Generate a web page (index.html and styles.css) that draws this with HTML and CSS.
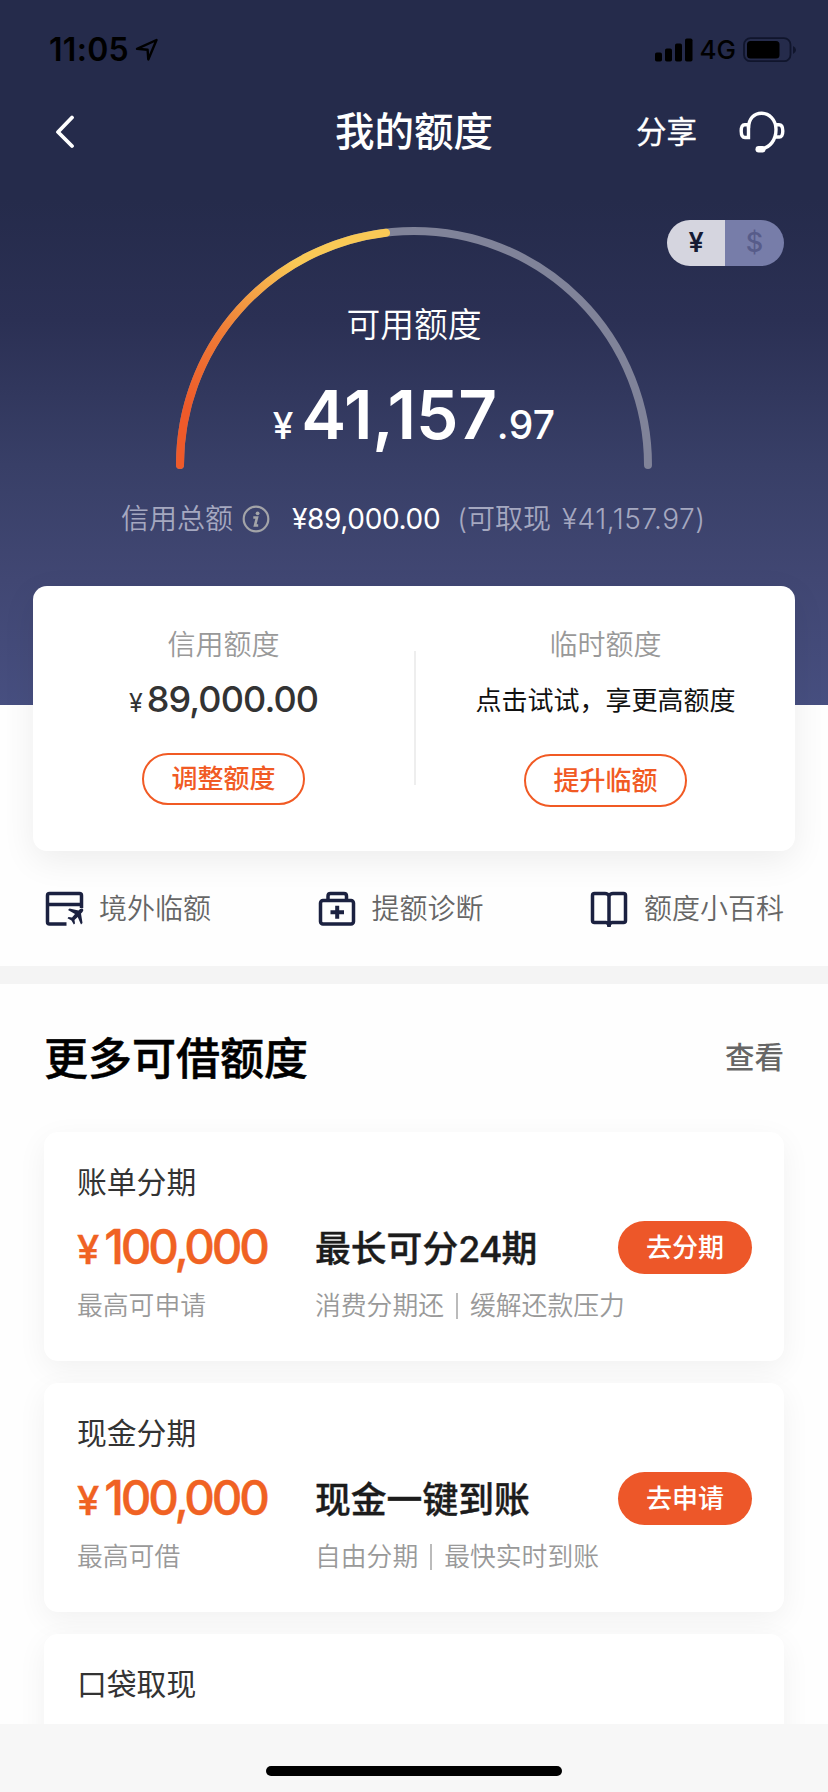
FILE: index.html
```html
<!DOCTYPE html>
<html lang="zh-CN">
<head>
<meta charset="utf-8">
<title>我的额度</title>
<link rel="stylesheet" href="styles.css">
</head>
<body>
<div class="screen">
  <header class="hero">
    <div class="status">
      <span class="clock">11:05</span>
      <svg class="loc" width="24" height="24" viewBox="0 0 24 24"><path d="M2 10.8 21.5 2 13.3 21.5 12.6 11.8Z" fill="none" stroke="#000" stroke-width="2.4" stroke-linejoin="round"/></svg>
      <span class="status-right">
        <svg width="38" height="24" viewBox="0 0 38 24"><rect x="0" y="14.5" width="7" height="9" rx="1.8"/><rect x="10" y="10.5" width="7" height="13" rx="1.8"/><rect x="20" y="5.5" width="7" height="18" rx="1.8"/><rect x="30" y="0.5" width="7.5" height="23" rx="1.8"/></svg>
        <span class="net">4G</span>
        <svg width="54" height="26" viewBox="0 0 54 26"><rect x="1" y="1.2" width="46.5" height="23" rx="6.5" fill="none" stroke="#10152c" stroke-width="1.8"/><rect x="4" y="4" width="32.5" height="17.5" rx="3.5"/><path d="M50 9q3 1.500 3 4t-3 4z" fill="#10152c"/></svg>
      </span>
    </div>
    <nav class="nav">
      <svg class="back" width="20" height="34" viewBox="0 0 20 34"><path d="M17 2.500 3 17 17 31" fill="none" stroke="#fff" stroke-width="3.8" stroke-linecap="round" stroke-linejoin="round"/></svg>
      <h1 class="title">我的额度</h1>
      <div class="nav-right">
        <span class="share">分享</span>
        <svg width="46" height="42" viewBox="0 0 46 42" fill="none" stroke="#fff" stroke-width="3.4"><path d="M9.500 17C9.500 8 15 2.200 22.500 2.200S37 8.500 37 18.500C37 29 31 36.500 22.500 38" stroke-linecap="round"/><path d="M9.500 13.800V26.500H6Q2.200 26.500 2.200 20T6 13.800Z"/><path d="M36.500 13.800H40Q43.800 13.800 43.800 20T40 26H36"/><rect x="16.500" y="35" width="10" height="6.5" rx="3.2" fill="#fff" stroke="none"/></svg>
      </div>
    </nav>
    <div class="gauge">
      <svg class="arc" width="476" height="244" viewBox="0 0 476 244">
        <defs><linearGradient id="heat" gradientUnits="userSpaceOnUse" x1="10" y1="180" x2="120" y2="35"><stop offset="0" stop-color="#ee5a2a"/><stop offset=".45" stop-color="#ef7c36"/><stop offset="1" stop-color="#f9c956"/></linearGradient></defs>
        <path d="M4 238A234 234 0 0 1 472 238" fill="none" stroke="#808399" stroke-width="8" stroke-linecap="round"/>
        <path d="M4 238A234 234 0 0 1 210 5.700" fill="none" stroke="url(#heat)" stroke-width="8" stroke-linecap="round"/>
      </svg>
      <div class="readout">
        <div class="readout-label">可用额度</div>
        <div class="readout-value"><span class="yen">¥</span><span class="int">41,157</span><span class="dec">.97</span></div>
      </div>
      <div class="currency"><span class="cny">¥</span><span class="usd">$</span></div>
    </div>
    <div class="total">
      <span class="dim">信用总额</span>
      <svg class="info" width="28" height="28" viewBox="0 0 28 28"><circle cx="14" cy="14" r="12.3" fill="none" stroke="#a3a4a8" stroke-width="2.2"/><circle cx="15.6" cy="8.3" r="1.9" fill="#a3a4a8"/><path d="M11.300 12.500H15L13 20.500H16.200" fill="none" stroke="#a3a4a8" stroke-width="2.6"/></svg>
      <span class="total-sum">¥89,000.00</span>
      <span class="dim paren">(可取现</span>
      <span class="dim cash">¥41,157.97)</span>
    </div>
  </header>

  <section class="limits">
    <div class="limit">
      <div class="limit-name">信用额度</div>
      <div class="limit-sum"><span class="limit-yen">¥</span>89,000.00</div>
      <a class="outline-btn">调整额度</a>
    </div>
    <div class="limit-split"></div>
    <div class="limit">
      <div class="limit-name">临时额度</div>
      <div class="limit-tip">点击试试，享更高额度</div>
      <a class="outline-btn tall">提升临额</a>
    </div>
  </section>

  <section class="links">
    <a class="link"><svg width="40" height="36" viewBox="-1.500 0 40 36" fill="none" stroke="#1b2140" stroke-width="3.500"><path d="M36 17V4.500Q36 2.500 34 2.500H4Q2 2.500 2 4.500V31Q2 33 4 33H21M2 13.500H36"/><path d="M37.500 18C36 16.800 34.500 18 33 19.500L24 17.500 22.500 19 29.500 23 26.500 26.500 23 26 22 27.200 26 29.500 28.300 33.500 29.500 32.500 29 29 32.200 26 35.500 33.500 37 32 35.500 22.500C37 21 38.500 19.500 37.500 18Z" fill="#1b2140" stroke="none"/></svg><span>境外临额</span></a>
    <a class="link"><svg width="40" height="36" viewBox="-1.500 0 40 36" fill="none" stroke="#1b2140" stroke-width="3.500"><rect x="3" y="9.500" width="33" height="23.500" rx="2.500"/><path d="M10.500 9V5Q10.500 2.500 13 2.500H26.500Q29 2.500 29 5V9"/><path d="M13 21.200H26.500M19.700 14.700V27.700" stroke-width="4"/></svg><span>提额诊断</span></a>
    <a class="link"><svg width="40" height="38" viewBox="-.500 0 40 38" fill="none" stroke="#1b2140" stroke-width="3.500"><path d="M19.500 6Q18.500 3.500 15.500 3.500H5Q3 3.500 3 5.500V30.500Q3 32.500 5 32.500H16.500Q19.500 32.500 19.500 37Q19.500 32.500 22.500 32.500H34Q36 32.500 36 30.500V5.500Q36 3.500 34 3.500H23.500Q20.500 3.500 19.500 6V36"/></svg><span>额度小百科</span></a>
  </section>

  <section class="more">
    <div class="more-head"><h2>更多可借额度</h2><a class="view">查看</a></div>
    <article class="offer">
      <div class="offer-name">账单分期</div>
      <div class="offer-main">
        <div class="offer-sum"><span class="offer-yen">¥</span>100,000</div>
        <div class="offer-title">最长可分<span class="num">24</span>期</div>
        <a class="solid-btn">去分期</a>
      </div>
      <div class="offer-sub"><span>最高可申请</span><span class="pair">消费分期还<i class="bar"></i>缓解还款压力</span></div>
    </article>
    <article class="offer">
      <div class="offer-name">现金分期</div>
      <div class="offer-main">
        <div class="offer-sum"><span class="offer-yen">¥</span>100,000</div>
        <div class="offer-title">现金一键到账</div>
        <a class="solid-btn">去申请</a>
      </div>
      <div class="offer-sub"><span>最高可借</span><span class="pair">自由分期<i class="bar"></i>最快实时到账</span></div>
    </article>
    <article class="offer">
      <div class="offer-name">口袋取现</div>
    </article>
  </section>
  <footer class="home"><span class="home-bar"></span></footer>
</div>
</body>
</html>
```
FILE: styles.css
```css
* { box-sizing: border-box; }
body { margin: 0; font-family: Inter, "Noto Sans CJK SC", sans-serif; background: #fff; }
h1, h2 { margin: 0; }
svg { display: block; flex: none; }

.screen { width: 828px; height: 1792px; overflow: hidden; display: flex; flex-direction: column; background: #fefefe; }

.hero { height: 705px; flex: none; background: linear-gradient(#252b4b 0, #252b4b 200px, #2b3054 320px, #383f67 465px, #414773 580px, #474f80 705px); color: #fff; }

.status { height: 70px; padding: 30px 31px 0 49px; display: flex; align-items: center; color: #000; }
.clock { font-size: 32px; font-weight: 600; line-height: 38px; letter-spacing: .3px; }
.loc { margin-left: 6px; }
.status-right { margin-left: auto; display: flex; align-items: center; }
.net { font-size: 26px; font-weight: 450; line-height: 30px; margin: 0 7px; }

.nav { height: 124px; display: grid; grid-template-columns: 1fr auto 1fr; align-items: center; padding: 0 43px; }
.back { margin-left: 12px; }
.title { grid-column: 2; font-size: 39.5px; font-weight: 500; line-height: 58px; }
.nav-right { display: flex; justify-content: flex-end; align-items: center; gap: 42px; }
.share { font-size: 30.5px; line-height: 44px; -webkit-text-stroke: .3px #fff; }

.gauge { height: 277px; display: grid; grid-template-columns: 176px 476px 1fr; padding-top: 33px; }
.arc { grid-area: 1 / 2; }
.readout { grid-area: 1 / 2; text-align: center; padding-top: 73px; }
.readout-label { font-size: 33.8px; line-height: 50px; font-weight: 350; }
.readout-value { display: flex; justify-content: center; align-items: baseline; margin-top: 25px; line-height: 80px; }
.yen { font-size: 37px; font-weight: 500; margin-right: 8px; }
.int { font-size: 67.5px; font-weight: 600; letter-spacing: -.2px; }
.dec { font-size: 39px; font-weight: 500; letter-spacing: .3px; }
.currency { grid-area: 1 / 3; justify-self: end; margin: -7px 44px 0 0; width: 117px; height: 46px; border-radius: 23px; overflow: hidden; display: grid; grid-template-columns: 58px 59px; text-align: center; font-size: 27px; line-height: 46px; font-weight: 600; }
.cny { background: #d5d5df; color: #161a33; }
.usd { background: #777da9; color: #575c8a; font-weight: 500; }

.total { height: 56px; margin-top: 20px; display: flex; align-items: center; padding-left: 121px; font-size: 28px; line-height: 40px; white-space: nowrap; }
.dim { color: #a5a8c0; font-weight: 350; }
.info { margin: 0 22px 0 9px; }
.total-sum { letter-spacing: -.35px; }
.paren { margin-left: 17px; }
.cash { margin-left: 11px; letter-spacing: .5px; }

.limits { flex: none; width: 762px; height: 265px; margin: -119px auto 0; background: #fff; border-radius: 14px; box-shadow: 0 10px 34px rgba(0, 0, 0, .07); display: grid; grid-template-columns: 381px 2px 379px; position: relative; }
.limit { display: flex; flex-direction: column; align-items: center; padding-top: 39px; }
.limit-split { height: 134px; margin-top: 65px; background: #eee; }
.limit-name { font-size: 28px; line-height: 40px; color: #999; font-weight: 350; }
.limit-sum { height: 44px; font-size: 36px; line-height: 44px; font-weight: 500; color: #333; margin-top: 12px; letter-spacing: -.9px; }
.limit-yen { font-size: 25px; font-weight: 400; margin-right: 5px; }
.limit-tip { height: 44px; font-size: 26px; line-height: 46px; margin-top: 13px; color: #111; }
.outline-btn { margin-top: 32px; width: 163px; height: 52px; border: 2px solid #f15a24; border-radius: 27px; color: #f15a24; font-size: 26px; font-weight: 500; line-height: 48px; text-align: center; }
.outline-btn.tall { height: 53px; line-height: 49px; }

.links { flex: none; height: 115px; padding: 0 44px; display: flex; justify-content: space-between; align-items: center; }
.link { display: flex; align-items: center; gap: 15px; color: #666; font-size: 28px; line-height: 40px; font-weight: 350; }

.more { border-top: 18px solid #f4f4f4; flex: none; height: 758px; padding: 0 44px; overflow: hidden; background: #fefefe; }
.more-head { height: 148px; display: flex; align-items: center; justify-content: space-between; }
.more-head h2 { font-size: 44px; line-height: 64px; padding-top: 2px; font-weight: 500; color: #000; -webkit-text-stroke: .5px #000; }
.view { font-size: 29.5px; line-height: 44px; padding-bottom: 3px; font-weight: 500; color: #666; }
.offer { height: 229px; margin-bottom: 22px; background: #fff; border-radius: 14px; box-shadow: 0 8px 30px rgba(0, 0, 0, .055); padding: 29px 32px 0 33px; }
.offer-name { height: 40px; font-size: 29.8px; line-height: 42px; color: #333; }
.offer-main { height: 53px; margin-top: 20px; display: grid; grid-template-columns: 238px 1fr 134px; grid-template-rows: 53px; }
.offer-sum { color: #f06223; font-size: 47.5px; height: 53px; line-height: 51px; font-weight: 500; letter-spacing: -3.2px; -webkit-text-stroke: .4px #f06223; }
.offer-yen { font-size: 40px; margin-right: 5px; letter-spacing: 0; }
.offer-title { font-size: 35.8px; line-height: 56px; color: #1c1c1c; font-weight: 500; -webkit-text-stroke: .4px #1c1c1c; }
.num { letter-spacing: -.8px; }
.solid-btn { height: 53px; border-radius: 27px; background: #ed5729; color: #fff; font-size: 26px; font-weight: 500; line-height: 53px; text-align: center; }
.offer-sub { display: grid; grid-template-columns: 238px 1fr; margin-top: 13px; font-size: 25.8px; line-height: 38px; color: #999; font-weight: 350; }
.pair { display: flex; align-items: center; }
.bar { width: 2px; height: 26px; background: #bbb; margin: 0 12px; }

.home { flex: none; height: 68px; background: #f7f7f7; display: flex; justify-content: center; padding-top: 42px; }
.home-bar { width: 296px; height: 10px; border-radius: 5px; background: #000; }
```
